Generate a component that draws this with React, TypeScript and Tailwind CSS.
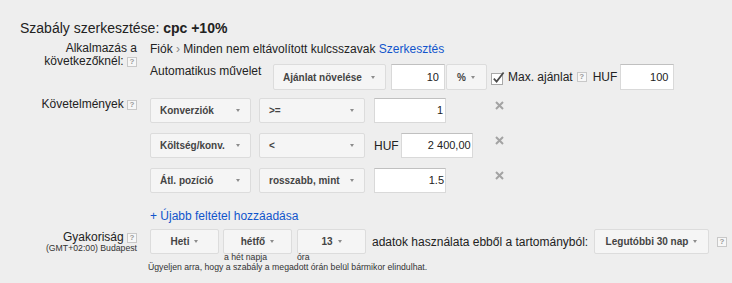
import React from "react";

function Help({ className = "" }: { className?: string }) {
  return (
    <span
      className={`inline-flex h-[10px] w-[10px] items-center justify-center border border-[#c8c8c8] bg-[#f7f7f7] align-middle text-[8px] font-bold leading-none text-[#9a9a9a] ${className}`}
    >
      ?
    </span>
  );
}

function Arrow() {
  return (
    <span className="inline-block h-0 w-0 border-x-[2.5px] border-t-[3px] border-x-transparent border-t-[#8c8c8c]" />
  );
}

function DD({ label, className = "" }: { label: string; className?: string }) {
  return (
    <div
      className={`flex h-full shrink-0 items-center justify-between rounded-[2px] border border-[#dcdcdc] bg-[#f5f5f5] pl-[9px] pr-[10px] text-[10px] font-bold text-[#444] ${className}`}
    >
      <span className="whitespace-nowrap">{label}</span>
      <Arrow />
    </div>
  );
}

function DDc({ label, className = "" }: { label: string; className?: string }) {
  return (
    <div
      className={`flex h-full shrink-0 items-center justify-center gap-[5px] rounded-[2px] border border-[#dcdcdc] bg-[#f5f5f5] text-[10px] font-bold text-[#444] ${className}`}
    >
      <span className="whitespace-nowrap">{label}</span>
      <Arrow />
    </div>
  );
}

function Field({ value, className = "" }: { value: string; className?: string }) {
  return (
    <div
      className={`flex h-full shrink-0 items-center justify-end border border-[#d9d9d9] border-t-[#c0c0c0] bg-white text-[11px] text-[#222] ${className}`}
    >
      {value}
    </div>
  );
}

function XIcon({ className = "" }: { className?: string }) {
  return (
    <svg width="9" height="9" viewBox="0 0 9 9" className={className}>
      <path d="M1 1 L8 8 M8 1 L1 8" stroke="#a3a3a3" strokeWidth="2" fill="none" />
    </svg>
  );
}

function Check() {
  return (
    <svg width="15" height="15" viewBox="0 0 15 15" className="shrink-0">
      <rect x="0.5" y="3.5" width="11" height="11" fill="#fff" stroke="#a8a8a8" />
      <path d="M2.8 8.6 L5.6 11.6 L12.6 2.4" fill="none" stroke="#4a4a4a" strokeWidth="1.7" />
    </svg>
  );
}

export default function App() {
  return (
    <div className="h-[283px] w-[732px] overflow-hidden bg-[#eeeeee] font-['Liberation_Sans',Arial,sans-serif] text-[#222]">
      <div className="pl-[20px] pt-[20px] text-[14px] leading-[16px]">
        Szabály szerkesztése: <b>cpc +10%</b>
      </div>

      {/* Alkalmazás */}
      <div className="mt-[6px] flex">
        <div className="w-[137px] text-right text-[12px] leading-[13px]">
          Alkalmazás a
          <br />
          következőknél: <Help />
        </div>
        <div className="ml-[13px]">
          <div className="whitespace-nowrap text-[12px] leading-[14px]">
            Fiók <span className="text-[#888]">›</span> Minden nem eltávolított kulcsszavak{" "}
            <span className="text-[#1155cc]">Szerkesztés</span>
          </div>
          <div className="mt-[8px] flex h-[26px] items-center">
            <div className="w-[123px] self-start whitespace-nowrap text-[12px] leading-[14px]">
              Automatikus művelet
            </div>
            <DD label="Ajánlat növelése" className="w-[113px]" />
            <Field value="10" className="ml-[5px] w-[54px] pr-[5px]" />
            <DD label="%" className="ml-[1px] w-[41px] pl-[10px] pr-[11px]" />
            <div className="ml-[4px] flex items-center">
              <Check />
            </div>
            <span className="ml-[2px] whitespace-nowrap text-[12px]">Max. ajánlat</span>
            <Help className="ml-[4px]" />
            <span className="ml-[6px] text-[12px]">HUF</span>
            <Field value="100" className="ml-[3px] w-[54px] pr-[5px]" />
          </div>
        </div>
      </div>

      {/* Követelmények */}
      <div className="mt-[8px] flex">
        <div className="w-[137px] text-right text-[12px] leading-[13px]">
          Követelmények <Help />
        </div>
        <div className="ml-[13px]">
          <div className="flex flex-col gap-[10px]">
            <div className="flex h-[25px]">
              <DD label="Konverziók" className="w-[101px]" />
              <DD label=">=" className="ml-[8px] w-[106px]" />
              <div className="ml-[9px] flex h-full w-[121px] items-center">
                <Field value="1" className="w-[72px] pr-[2px]" />
              </div>
              <XIcon className="mt-[3px]" />
            </div>
            <div className="flex h-[25px]">
              <DD label="Költség/konv." className="w-[101px]" />
              <DD label="<" className="ml-[8px] w-[106px]" />
              <div className="ml-[9px] flex h-full w-[121px] items-center">
                <span className="text-[12px]">HUF</span>
                <Field value="2 400,00" className="ml-[2px] w-[72px] pr-[1px]" />
              </div>
              <XIcon className="mt-[3px]" />
            </div>
            <div className="flex h-[25px]">
              <DD label="Átl. pozíció" className="w-[101px]" />
              <DD label="rosszabb, mint" className="ml-[8px] w-[106px]" />
              <div className="ml-[9px] flex h-full w-[121px] items-center">
                <Field value="1.5" className="w-[72px] pr-[1px]" />
              </div>
              <XIcon className="mt-[3px]" />
            </div>
          </div>
          <div className="mt-[16px] text-[12px] leading-[14px] text-[#1155cc]">+ Újabb feltétel hozzáadása</div>
        </div>
      </div>

      {/* Gyakoriság */}
      <div className="mt-[6px] flex">
        <div className="w-[137px] pt-[2px] text-right">
          <div className="text-[12px] leading-[13px]">
            Gyakoriság <Help />
          </div>
          <div className="-mt-[1px] whitespace-nowrap text-[8.7px] leading-[10px] text-[#333]">
            (GMT+02:00) Budapest
          </div>
        </div>
        <div className="ml-[13px]">
          <div className="flex h-[25px] items-center">
            <DDc label="Heti" className="w-[69px]" />
            <DDc label="hétfő" className="ml-[4px] w-[69px]" />
            <DDc label="13" className="ml-[5px] w-[69px]" />
            <span className="ml-[6px] w-[222px] whitespace-nowrap text-[12px]">
              adatok használata ebből a tartományból:
            </span>
            <DDc label="Legutóbbi 30 nap" className="w-[115px] gap-[4px]" />
            <Help className="ml-[8px]" />
          </div>
          <div className="-mt-[2px] flex text-[8.7px] leading-[10px] text-[#333]">
            <span className="ml-[74px] w-[73px]">a hét napja</span>
            <span>óra</span>
          </div>
          <div className="-ml-[2px] whitespace-nowrap text-[8.7px] leading-[10px] text-[#333]">
            Ügyeljen arra, hogy a szabály a megadott órán belül bármikor elindulhat.
          </div>
        </div>
      </div>
    </div>
  );
}
